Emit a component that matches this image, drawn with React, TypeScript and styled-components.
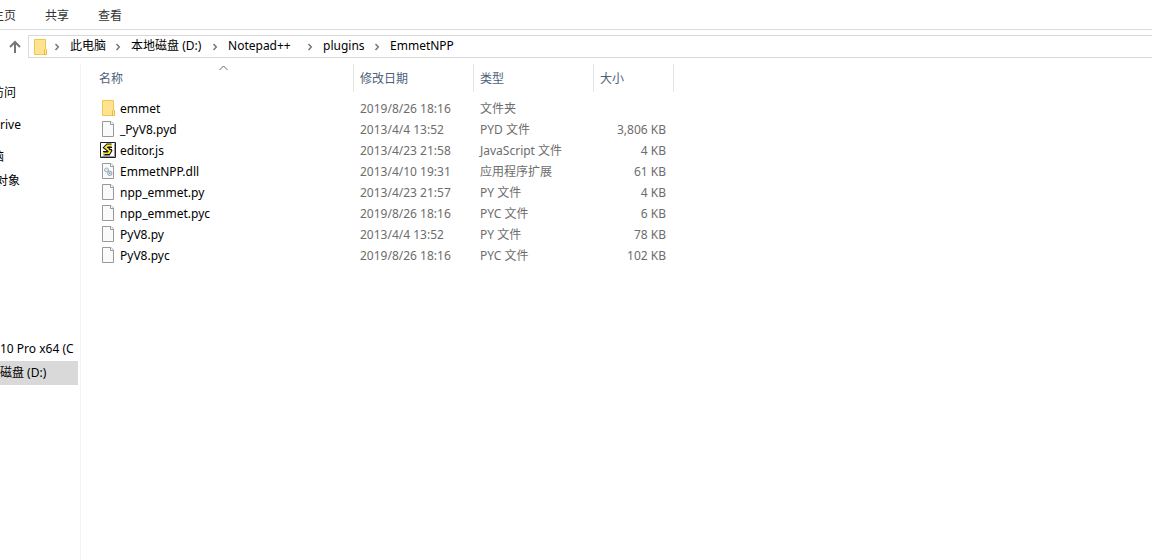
import React from 'react';
import styled, { createGlobalStyle } from 'styled-components';

const GlobalStyle = createGlobalStyle`
  * { box-sizing: border-box; }
  body { margin: 0; background: #fff; }
  body, button {
    font-family: "Noto Sans", "Noto Sans CJK SC", sans-serif;
    font-size: 12px;
    line-height: 20px;
  }
  button { border: 0; padding: 0; background: none; color: inherit; white-space: nowrap; }
`;

const Window = styled.div`
  display: flex;
  flex-direction: column;
  min-height: 100vh;
  overflow: hidden;
  color: #000;
`;

const Ribbon = styled.div`
  display: flex;
  align-items: center;
  height: 30px;
  padding-top: 2px;
  border-bottom: 1px solid #dadbdc;
  overflow: hidden;
`;

const RibbonTab = styled.button<{ $clipped?: boolean }>`
  flex: none;
  margin-left: ${p => (p.$clipped ? '-8px' : '0')};
  margin-right: 29px;
  color: #333;
`;

const AddressRow = styled.div`
  display: flex;
  align-items: center;
  padding-top: 5px;
`;

const UpButton = styled.button`
  display: flex;
  justify-content: center;
  width: 28px;
  padding-left: 2px;
`;

const AddressBar = styled.nav`
  display: flex;
  flex: 1;
  align-items: center;
  height: 23px;
  padding-left: 3px;
  border: 1px solid #d9d9d9;
  border-right: 0;
`;

const CrumbList = styled.div`
  display: flex;
  align-items: center;
  padding-left: 6px;
`;

const Crumb = styled.button<{ $width: number }>`
  min-width: ${p => p.$width}px;
  height: 21px;
  padding-bottom: 2px;
  margin-left: 10px;
  margin-right: 9px;
  color: #000;
  text-align: left;
`;

const Body = styled.div`
  display: flex;
  flex: 1;
  padding-top: 6px;
`;

const Sidebar = styled.nav`
  display: flex;
  flex-direction: column;
  width: 81px;
  padding-top: 17px;
  border-right: 1px solid #f3f3f3;
`;

const NavGroup = styled.div<{ $gap: number }>`
  display: flex;
  flex-direction: column;
  margin-bottom: ${p => p.$gap}px;
`;

const NavItem = styled.button<{ $scrolled?: number; $selected?: boolean }>`
  display: flex;
  align-items: center;
  width: 78px;
  height: 24px;
  overflow: hidden;
  background: ${p => (p.$selected ? '#d9d9d9' : 'transparent')};

  span {
    margin-left: -${p => p.$scrolled ?? 0}px;
  }
`;

const Content = styled.main`
  flex: 1;
  padding-left: 12px;
`;

const FileTable = styled.table`
  table-layout: fixed;
  width: 581px;
  border-collapse: separate;
  border-spacing: 0;

  tbody::before {
    content: '';
    display: block;
    height: 6px;
  }
`;

const HeaderCell = styled.th<{ $width: number }>`
  position: relative;
  width: ${p => p.$width}px;
  height: 28px;
  padding: 2px 6px 0;
  border-right: 1px solid #e5e5e5;
  color: #4c607a;
  font-weight: 400;
  text-align: left;
  vertical-align: middle;
`;

const SortMark = styled.svg`
  position: absolute;
  top: 1px;
  left: 50%;
  margin-left: -4px;
`;

const Cell = styled.td<{ $numeric?: boolean }>`
  height: 21px;
  padding: 0 8px 0 6px;
  color: #6d6d6d;
  text-align: ${p => (p.$numeric ? 'right' : 'left')};
  white-space: nowrap;
`;

const NameCell = styled(Cell)`
  padding-left: 7px;
  color: #000;
`;

const FileName = styled.div`
  display: flex;
  align-items: center;
  gap: 4px;

  svg {
    margin-bottom: 1px;
  }
`;

const FolderIcon = () => (
  <svg width="16" height="16" viewBox="0 0 16 16" aria-hidden="true">
    <path d="M2.5.5h11v9l.5.5v5.500h-11.500z" fill="#ffe391" stroke="#eec84e" />
    <path d="M12.500 15.500v-5l1-1 1 1v5z" fill="#ffe9a6" stroke="#e8bd3c" />
  </svg>
);

const Page = ({ children }: { children?: React.ReactNode }) => (
  <svg width="16" height="16" viewBox="0 0 16 16" aria-hidden="true">
    <path d="M2.500.5h8.500l2.500 2.500v12.500h-11z" fill="#fafafa" stroke="#999" />
    <path d="M10.500.5v3h3" fill="#fff" stroke="#999" />
    {children}
  </svg>
);

const LibraryIcon = () => (
  <Page>
    <circle cx="6.500" cy="7" r="2" fill="#dce9f1" stroke="#9db4c2" />
    <circle cx="9.800" cy="10.300" r="2.200" fill="#dce9f1" stroke="#8ba5b5" />
    <circle cx="9.800" cy="10.300" r=".7" fill="#6d8799" />
  </Page>
);

const ScriptIcon = () => (
  <svg width="16" height="16" viewBox="0 0 16 16" aria-hidden="true">
    <path d="M.5.5h15v15H.5z" fill="#fff" stroke="#222" />
    <path d="M1.500 14.500h13V1.500" fill="none" stroke="#999" />
    <path d="M11.500 3.500H7.500L5.500 5.500l4.500 3.500-1.500 2.500H3.500" fill="none" stroke="#111" strokeWidth="4" />
    <path d="M12 3.500H7.500L5.500 5.500l4.500 3.500-1.500 2.500H3" fill="none" stroke="#f5e431" strokeWidth="2" />
    <path d="M7 5.500h5M9 7.500h3M3 9.500h4M5 12.500h5" stroke="#111" />
  </svg>
);

const Chevron = () => (
  <svg width="6" height="8" viewBox="0 0 6 8" aria-hidden="true">
    <path d="M1.500 1l2.800 3-2.800 3" fill="none" stroke="#777" strokeWidth="1.500" />
  </svg>
);

const icons = { folder: FolderIcon, page: Page, script: ScriptIcon, library: LibraryIcon };

const crumbs = [
  { label: '此电脑', width: 36 },
  { label: '本地磁盘 (D:)', width: 72 },
  { label: 'Notepad++', width: 70 },
  { label: 'plugins', width: 42 },
  { label: 'EmmetNPP', width: 64 },
];

const files: { icon: keyof typeof icons; name: string; date: string; type: string; size: string }[] = [
  { icon: 'folder', name: 'emmet', date: '2019/8/26 18:16', type: '文件夹', size: '' },
  { icon: 'page', name: '_PyV8.pyd', date: '2013/4/4 13:52', type: 'PYD 文件', size: '3,806 KB' },
  { icon: 'script', name: 'editor.js', date: '2013/4/23 21:58', type: 'JavaScript 文件', size: '4 KB' },
  { icon: 'library', name: 'EmmetNPP.dll', date: '2013/4/10 19:31', type: '应用程序扩展', size: '61 KB' },
  { icon: 'page', name: 'npp_emmet.py', date: '2013/4/23 21:57', type: 'PY 文件', size: '4 KB' },
  { icon: 'page', name: 'npp_emmet.pyc', date: '2019/8/26 18:16', type: 'PYC 文件', size: '6 KB' },
  { icon: 'page', name: 'PyV8.py', date: '2013/4/4 13:52', type: 'PY 文件', size: '78 KB' },
  { icon: 'page', name: 'PyV8.pyc', date: '2019/8/26 18:16', type: 'PYC 文件', size: '102 KB' },
];

export default function App() {
  return (
    <Window>
      <GlobalStyle />
      <Ribbon>
        <RibbonTab $clipped>主页</RibbonTab>
        <RibbonTab>共享</RibbonTab>
        <RibbonTab>查看</RibbonTab>
      </Ribbon>
      <AddressRow>
        <UpButton aria-label="Up">
          <svg width="14" height="14" viewBox="0 0 14 14" aria-hidden="true">
            <path d="M7 13V2M2 7l5-5 5 5" fill="none" stroke="#767676" strokeWidth="2" />
          </svg>
        </UpButton>
        <AddressBar>
          <FolderIcon />
          <CrumbList>
            {crumbs.map(crumb => (
              <React.Fragment key={crumb.label}>
                <Chevron />
                <Crumb $width={crumb.width}>{crumb.label}</Crumb>
              </React.Fragment>
            ))}
          </CrumbList>
        </AddressBar>
      </AddressRow>
      <Body>
        <Sidebar>
          <NavGroup $gap={8}>
            <NavItem $scrolled={8}><span>访问</span></NavItem>
          </NavGroup>
          <NavGroup $gap={8}>
            <NavItem><span>rive</span></NavItem>
          </NavGroup>
          <NavGroup $gap={144}>
            <NavItem $scrolled={8}><span>脑</span></NavItem>
            <NavItem $scrolled={4}><span>对象</span></NavItem>
          </NavGroup>
          <NavGroup $gap={0}>
            <NavItem><span>10 Pro x64 (C</span></NavItem>
            <NavItem $selected><span>磁盘 (D:)</span></NavItem>
          </NavGroup>
        </Sidebar>
        <Content>
          <FileTable>
            <thead>
              <tr>
                <HeaderCell $width={261}>
                  <SortMark width="9" height="6" viewBox="0 0 9 6" aria-hidden="true">
                    <path d="M.5 5l4-4 4 4" fill="none" stroke="#666" />
                  </SortMark>
                  <button>名称</button>
                </HeaderCell>
                <HeaderCell $width={120}><button>修改日期</button></HeaderCell>
                <HeaderCell $width={120}><button>类型</button></HeaderCell>
                <HeaderCell $width={80}><button>大小</button></HeaderCell>
              </tr>
            </thead>
            <tbody>
              {files.map(file => {
                const Icon = icons[file.icon];
                return (
                  <tr key={file.name}>
                    <NameCell>
                      <FileName>
                        <Icon />
                        {file.name}
                      </FileName>
                    </NameCell>
                    <Cell>{file.date}</Cell>
                    <Cell>{file.type}</Cell>
                    <Cell $numeric>{file.size}</Cell>
                  </tr>
                );
              })}
            </tbody>
          </FileTable>
        </Content>
      </Body>
    </Window>
  );
}
